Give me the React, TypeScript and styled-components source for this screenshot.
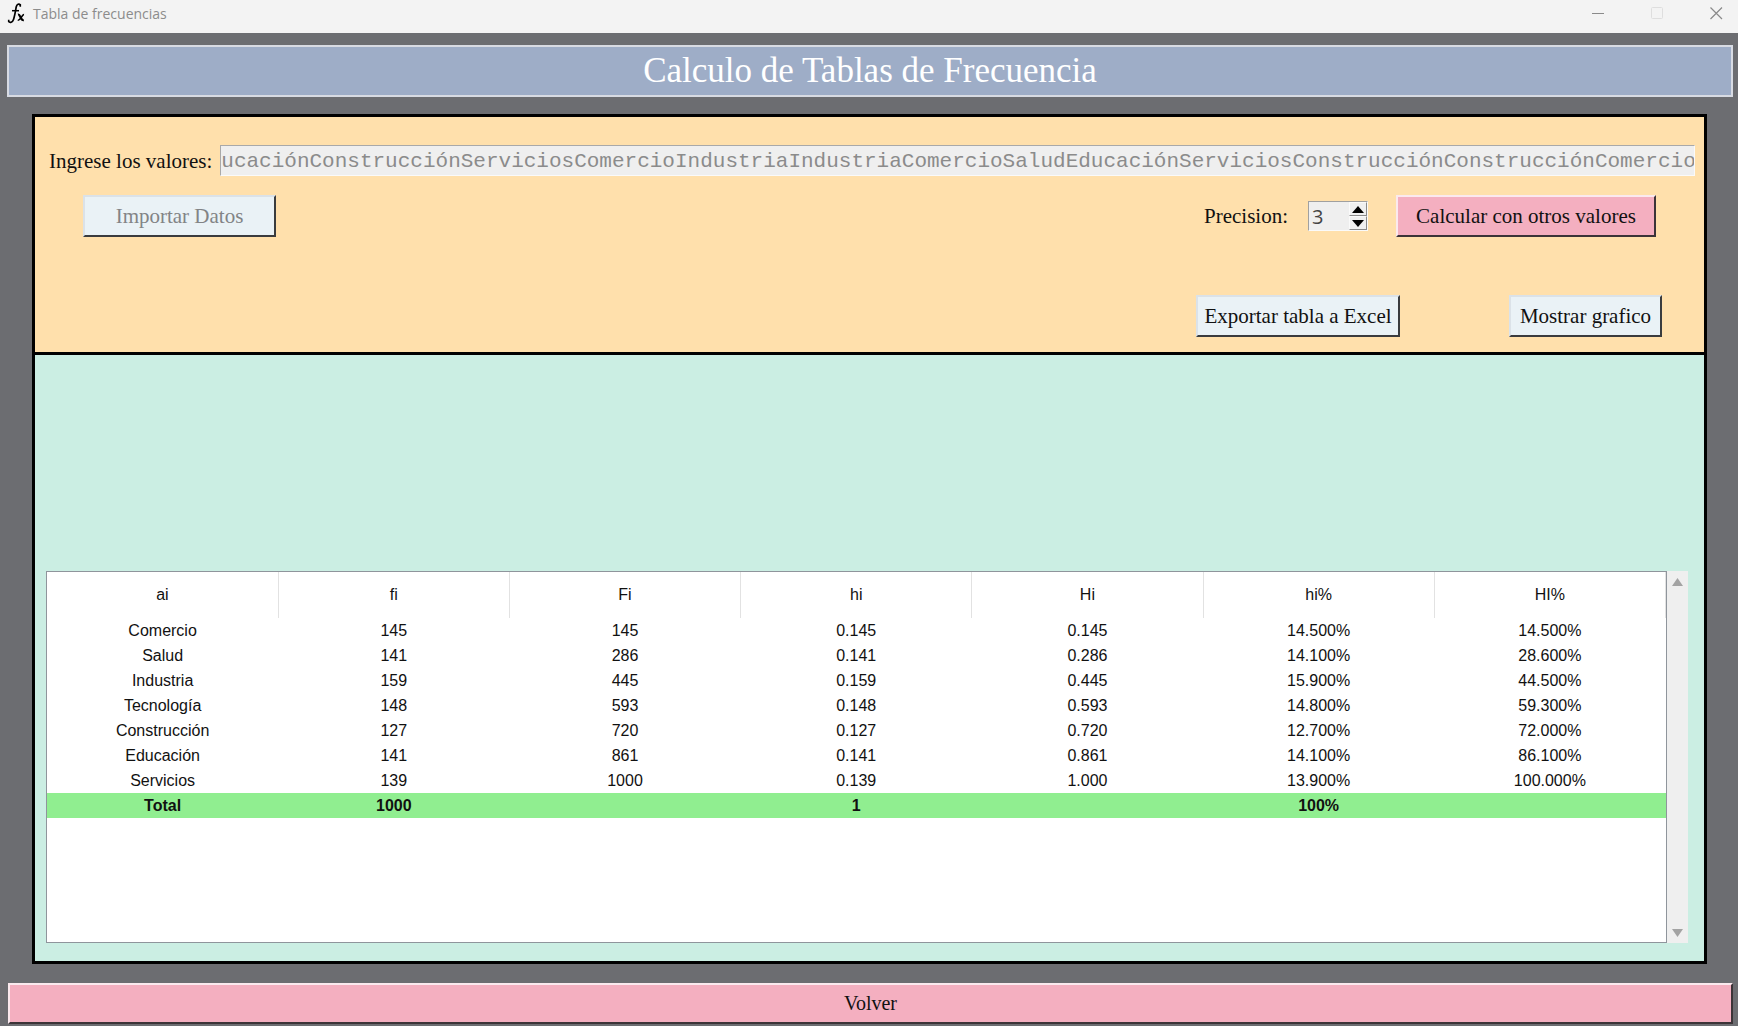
import React, { useState } from "react";
import styled, { createGlobalStyle } from "styled-components";

const colors = {
  frame: "#6c6d71",
  banner: "#9eadc7",
  form: "#ffe0ac",
  results: "#cbeee3",
  pink: "#f4afc0",
  ice: "#eaf2f6",
  field: "#efefef",
  total: "#90ee90",
};

const serif = '"Liberation Serif", "Times New Roman", serif';

const GlobalStyle = createGlobalStyle`
  *, *::before, *::after { box-sizing: border-box; }
  body { margin: 0; background: ${colors.frame}; }
`;

const Window = styled.div`
  display: flex;
  flex-direction: column;
  min-height: 100vh;
  background: ${colors.frame};
  font-family: ${serif};
  font-size: 21px;
  color: #111;
`;

const TitleBar = styled.header`
  display: flex;
  align-items: center;
  height: 33px;
  padding: 0 15px 6px 7px;
  background: #f3f3f3;
`;

const WindowTitle = styled.span`
  flex: 1;
  padding-left: 7px;
  font: 14px "Open Sans", "Noto Sans", sans-serif;
  color: #8c8c8c;
`;

const WindowControls = styled.div`
  display: flex;
  gap: 46px;
`;

const ControlButton = styled.button`
  display: flex;
  width: 13px;
  height: 13px;
  padding: 0;
  border: 0;
  background: none;
  color: #8a8a8a;

  &:disabled { color: #dedede; }
`;

const Banner = styled.h1`
  margin: 12px 5px 0 7px;
  border: 2px solid #d8dbe3;
  background: ${colors.banner};
  color: #fff;
  font-size: 35px;
  font-weight: 400;
  line-height: 48px;
  text-align: center;
`;

const Panel = styled.main`
  flex: 1;
  display: flex;
  flex-direction: column;
  margin: 17px 31px 19px 32px;
  border: 3px solid #000;
`;

const Form = styled.form`
  display: flex;
  flex-direction: column;
  padding: 28px 9px 15px 14px;
  border-bottom: 3px solid #000;
  background: ${colors.form};
`;

const ValuesRow = styled.div`
  display: flex;
  align-items: center;
  gap: 8px;
`;

const Label = styled.label`
  white-space: nowrap;
  line-height: 24px;
`;

const ValuesInput = styled.input`
  flex: 1;
  min-width: 0;
  height: 31px;
  padding: 2px 0 0;
  border: 1px solid;
  border-color: #a9a9a9 #fafafa #fafafa #a9a9a9;
  background: ${colors.field};
  color: #8b8b8b;
  font: 21px "Liberation Mono", "Courier New", monospace;
`;

const ActionsRow = styled.div`
  display: flex;
  align-items: center;
  padding: 19px 39px 0 34px;
`;

const ExportRow = styled.div`
  display: flex;
  justify-content: flex-end;
  gap: 109px;
  padding: 58px 33px 0 0;
`;

const PushButton = styled.button<{ $tone: "ice" | "pink"; $width?: number }>`
  width: ${(p) => (p.$width ? `${p.$width}px` : "auto")};
  height: 42px;
  padding: 0;
  border: 2px solid;
  border-color: ${(p) =>
    p.$tone === "pink" ? "#fbe9ee #3c3438 #3c3438 #fbe9ee" : "#dbe2e8 #3a3c3e #3a3c3e #dbe2e8"};
  background: ${(p) => colors[p.$tone]};
  color: #111;
  font: 21px ${serif};

  &:disabled { color: #828486; }
`;

const PrecisionGroup = styled.div`
  display: flex;
  align-items: center;
  gap: 20px;
  margin: 0 28px 0 auto;
`;

const SpinBox = styled.div`
  display: flex;
  width: 60px;
  height: 30px;
  border: 1px solid;
  border-color: #a0a0a0 #fafafa #fafafa #a0a0a0;
  background: ${colors.field};
`;

const SpinInput = styled.input`
  flex: 1;
  min-width: 0;
  padding: 0 0 0 3px;
  border: 0;
  background: none;
  color: #444;
  font: 20px "Open Sans", "Noto Sans", sans-serif;
  appearance: textfield;

  &::-webkit-inner-spin-button { appearance: none; margin: 0; }
`;

const SpinArrows = styled.div`
  display: grid;
  grid-template-rows: 1fr 1fr;
  width: 18px;
`;

const SpinButton = styled.button`
  display: grid;
  place-items: center;
  padding: 0;
  border: 1px solid;
  border-color: #fafafa #8a8a8a #8a8a8a #fafafa;
  background: #f0f0f0;
`;

const Results = styled.section`
  flex: 1;
  display: flex;
  padding: 216px 16px 18px 11px;
  background: ${colors.results};
`;

const TableFrame = styled.div`
  flex: 1;
  border: 1px solid #8f959c;
  background: #fff;
`;

const Table = styled.table`
  width: 100%;
  border-collapse: collapse;
  table-layout: fixed;
  font: 16px "Liberation Sans", Arial, sans-serif;
  color: #111;
`;

const HeadCell = styled.th`
  height: 46px;
  padding: 0;
  border-right: 1px solid #e2e2e2;
  font-weight: 400;
`;

const Cell = styled.td`
  height: 25px;
  padding: 0;
  text-align: center;
`;

const TotalRow = styled.tr`
  background: ${colors.total};
  font-weight: 700;
`;

const ScrollTrack = styled.div`
  display: flex;
  flex-direction: column;
  justify-content: space-between;
  align-items: center;
  width: 21px;
  padding: 7px 0 6px;
  background: #efefef;
`;

const ScrollButton = styled.button`
  display: flex;
  padding: 0;
  border: 0;
  background: none;
`;

const Footer = styled.footer`
  display: flex;
  padding: 0 5px 2px 8px;

  ${PushButton} {
    flex: 1;
    height: 41px;
    font-size: 20px;
  }
`;

const headers = ["ai", "fi", "Fi", "hi", "Hi", "hi%", "HI%"];

const rows = [
  ["Comercio", "145", "145", "0.145", "0.145", "14.500%", "14.500%"],
  ["Salud", "141", "286", "0.141", "0.286", "14.100%", "28.600%"],
  ["Industria", "159", "445", "0.159", "0.445", "15.900%", "44.500%"],
  ["Tecnología", "148", "593", "0.148", "0.593", "14.800%", "59.300%"],
  ["Construcción", "127", "720", "0.127", "0.720", "12.700%", "72.000%"],
  ["Educación", "141", "861", "0.141", "0.861", "14.100%", "86.100%"],
  ["Servicios", "139", "1000", "0.139", "1.000", "13.900%", "100.000%"],
];

const totals = ["Total", "1000", "", "1", "", "100%", ""];

const values =
  "ucaciónConstrucciónServiciosComercioIndustriaIndustriaComercioSaludEducaciónServiciosConstrucciónConstrucciónComercio";

function FunctionIcon() {
  return (
    <svg width="19" height="21" viewBox="0 0 19 21" fill="none" stroke="#000" aria-hidden="true">
      <path d="M13.500 2.200C12 .3 9.800 1 9.200 4C8.500 8 7.800 12.500 6.500 16.500C5.500 19.500 3 20 1.500 18.500" strokeWidth="1.700" />
      <path d="M5 7.700H12" strokeWidth="1.500" />
      <path d="M11 11.600C13.500 10.800 13.400 17.800 16.800 17.200" strokeWidth="2.200" />
      <path d="M17 11.600C15 11.200 13.500 17.800 10.800 17.200" strokeWidth="1.700" />
      <path d="M13.300 1.200V3.800M1.700 16.800V19" strokeWidth="1.600" />
    </svg>
  );
}

function Arrow({ down, width, height, color }: { down?: boolean; width: number; height: number; color: string }) {
  const points = down ? `0,0 ${width},0 ${width / 2},${height}` : `0,${height} ${width},${height} ${width / 2},0`;
  return (
    <svg width={width} height={height} aria-hidden="true">
      <polygon points={points} fill={color} />
    </svg>
  );
}

export default function App() {
  const [precision, setPrecision] = useState(3);
  const step = (by: number) => setPrecision((p) => Math.max(0, p + by));

  return (
    <Window>
      <GlobalStyle />
      <TitleBar>
        <FunctionIcon />
        <WindowTitle>Tabla de frecuencias</WindowTitle>
        <WindowControls>
          <ControlButton type="button" aria-label="Minimizar">
            <svg width="13" height="13" stroke="currentColor"><path d="M0 6.500H12" /></svg>
          </ControlButton>
          <ControlButton type="button" aria-label="Maximizar" disabled>
            <svg width="13" height="13" stroke="currentColor" fill="none"><rect x=".5" y=".5" width="11" height="11" rx="1" /></svg>
          </ControlButton>
          <ControlButton type="button" aria-label="Cerrar">
            <svg width="13" height="13" stroke="currentColor" strokeWidth="1.200"><path d="M.5 .5L12 12M12 .5L.5 12" /></svg>
          </ControlButton>
        </WindowControls>
      </TitleBar>

      <Banner>Calculo de Tablas de Frecuencia</Banner>

      <Panel>
        <Form onSubmit={(e) => e.preventDefault()}>
          <ValuesRow>
            <Label htmlFor="valores">Ingrese los valores:</Label>
            <ValuesInput id="valores" type="text" defaultValue={values} readOnly />
          </ValuesRow>
          <ActionsRow>
            <PushButton type="button" $tone="ice" $width={193} disabled>Importar Datos</PushButton>
            <PrecisionGroup>
              <Label htmlFor="precision">Precision:</Label>
              <SpinBox>
                <SpinInput
                  id="precision"
                  type="number"
                  value={precision}
                  onChange={(e) => setPrecision(Number(e.target.value))}
                />
                <SpinArrows>
                  <SpinButton type="button" aria-label="Aumentar" onClick={() => step(1)}>
                    <Arrow width={12} height={7} color="#000" />
                  </SpinButton>
                  <SpinButton type="button" aria-label="Disminuir" onClick={() => step(-1)}>
                    <Arrow down width={12} height={7} color="#000" />
                  </SpinButton>
                </SpinArrows>
              </SpinBox>
            </PrecisionGroup>
            <PushButton type="submit" $tone="pink" $width={260}>Calcular con otros valores</PushButton>
          </ActionsRow>
          <ExportRow>
            <PushButton type="button" $tone="ice" $width={204}>Exportar tabla a Excel</PushButton>
            <PushButton type="button" $tone="ice" $width={153}>Mostrar grafico</PushButton>
          </ExportRow>
        </Form>

        <Results>
          <TableFrame>
            <Table>
              <thead>
                <tr>{headers.map((h) => <HeadCell key={h} scope="col">{h}</HeadCell>)}</tr>
              </thead>
              <tbody>
                {rows.map((row) => (
                  <tr key={row[0]}>{row.map((value, i) => <Cell key={i}>{value}</Cell>)}</tr>
                ))}
              </tbody>
              <tfoot>
                <TotalRow>{totals.map((value, i) => <Cell key={i}>{value}</Cell>)}</TotalRow>
              </tfoot>
            </Table>
          </TableFrame>
          <ScrollTrack>
            <ScrollButton type="button" aria-label="Subir"><Arrow width={11} height={8} color="#a3a3a3" /></ScrollButton>
            <ScrollButton type="button" aria-label="Bajar"><Arrow down width={11} height={8} color="#a3a3a3" /></ScrollButton>
          </ScrollTrack>
        </Results>
      </Panel>

      <Footer>
        <PushButton type="button" $tone="pink">Volver</PushButton>
      </Footer>
    </Window>
  );
}
